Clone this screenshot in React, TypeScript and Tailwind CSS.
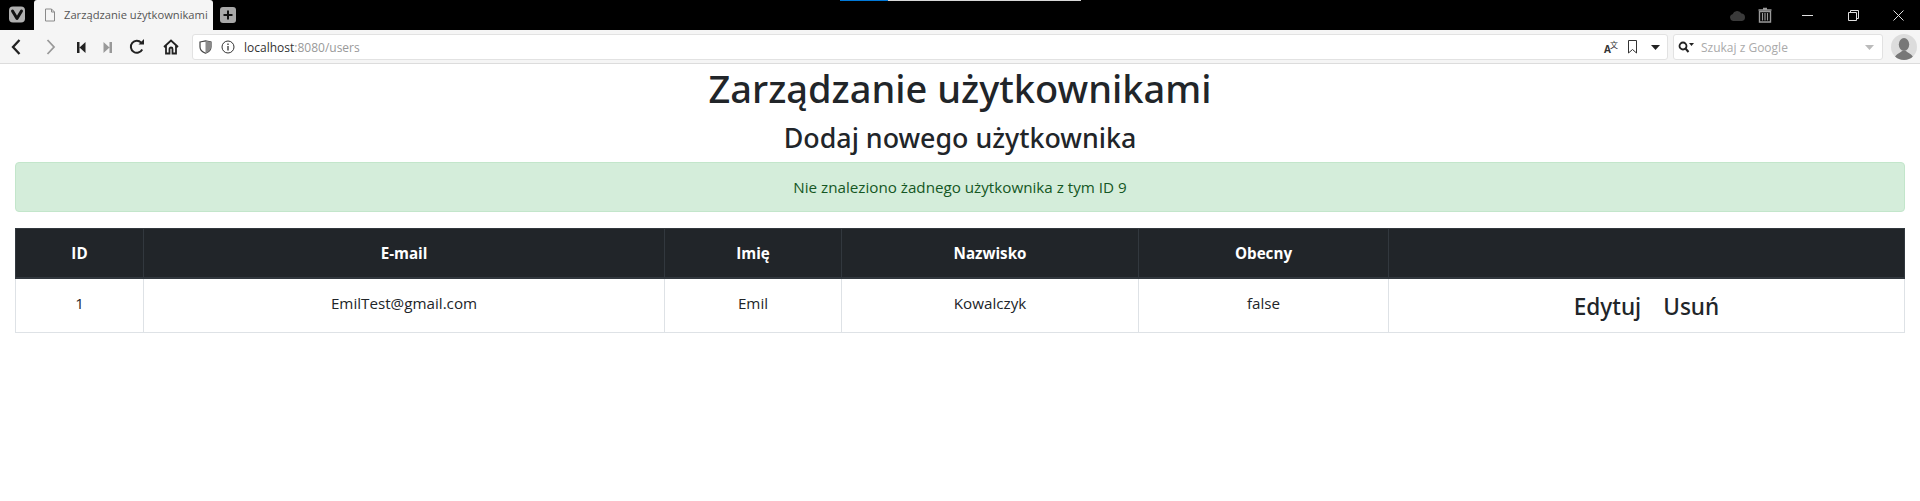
import React from "react";

const font = "font-['Open_Sans','Noto_Sans',sans-serif]";
const headingFont = "font-['Noto_Sans','Open_Sans',sans-serif]";

function TabBar() {
  return (
    <div className="relative flex h-[30px] items-stretch bg-black">
      <div className="absolute left-[840px] top-0 flex h-px">
        <div className="h-px w-[48px] bg-[#0078d7]" />
        <div className="h-px w-[193px] bg-[#d8d8d8]" />
      </div>
      <div className="flex w-[34px] items-center justify-center">
        <svg width="18" height="18" viewBox="0 0 18 18">
          <rect x="1" y="0.5" width="16" height="16" rx="4" fill="#b0b0b0" />
          <path d="M4.5 5 L9 12.5 L13.5 5" fill="none" stroke="#111" strokeWidth="3" strokeLinecap="round" strokeLinejoin="round" />
        </svg>
      </div>
      <div className="flex w-[179px] items-center overflow-hidden rounded-t-[3px] bg-[#f5f5f5] pl-[10px]">
        <svg width="12" height="14" viewBox="0 0 12 14" className="shrink-0">
          <path d="M1.5 1 H7.5 L10.5 4 V13 H1.5 Z M7.5 1 V4 H10.5" fill="none" stroke="#8a8a8a" strokeWidth="1" />
        </svg>
        <span className="ml-[8px] whitespace-nowrap text-[11.2px] text-[#555] font-['Open_Sans',sans-serif]">Zarządzanie użytkownikami</span>
      </div>
      <div className="ml-[7px] flex items-center">
        <svg width="16" height="16" viewBox="0 0 16 16">
          <rect width="16" height="16" rx="3" fill="#a8a8a8" />
          <path d="M8 3.5 V12.5 M3.5 8 H12.5" stroke="#111" strokeWidth="2" />
        </svg>
      </div>
      <div className="ml-auto flex items-center">
        <svg width="17" height="11" viewBox="0 0 17 11" className="mr-[12px]">
          <path d="M4 11 A3.5 3.5 0 0 1 3.5 4.2 A5 5 0 0 1 12.5 3.5 A3.8 3.8 0 0 1 13 11 Z" fill="#3a3a3a" />
        </svg>
        <svg width="14" height="16" viewBox="0 0 14 16" className="mr-[12px]">
          <path d="M5 1.5 H9 M0.5 3 H13.5" stroke="#9a9a9a" strokeWidth="1.6" fill="none" />
          <path d="M1.5 4.5 H12.5 V15 H1.5 Z" fill="none" stroke="#9a9a9a" strokeWidth="1.4" />
          <path d="M4.5 6 V13.5 M7 6 V13.5 M9.5 6 V13.5" stroke="#9a9a9a" strokeWidth="1.2" />
        </svg>
        <div className="flex w-[46px] justify-center">
          <div className="h-px w-[11px] bg-[#e0e0e0]" />
        </div>
        <div className="flex w-[46px] justify-center">
          <svg width="11" height="11" viewBox="0 0 11 11">
            <path d="M0.5 2.5 H8.5 V10.5 H0.5 Z M2.5 2.5 V0.5 H10.5 V8.5 H8.5" fill="none" stroke="#e0e0e0" />
          </svg>
        </div>
        <div className="flex w-[44px] justify-center">
          <svg width="11" height="11" viewBox="0 0 11 11">
            <path d="M0.5 0.5 L10.5 10.5 M10.5 0.5 L0.5 10.5" stroke="#e0e0e0" />
          </svg>
        </div>
      </div>
    </div>
  );
}

function Toolbar() {
  return (
    <div className="flex h-[34px] items-center border-b border-[#dcdcdc] bg-[#f5f5f5] pt-[1px]">
      <div className="flex w-[192px] shrink-0 items-center">
        <svg width="12" height="16" viewBox="0 0 12 16" className="ml-[10px]">
          <path d="M9.5 1 L3 8 L9.5 15" fill="none" stroke="#222" strokeWidth="2.3" />
        </svg>
        <svg width="12" height="16" viewBox="0 0 12 16" className="ml-[23px]">
          <path d="M2.5 1 L9 8 L2.5 15" fill="none" stroke="#999" strokeWidth="1.8" />
        </svg>
        <svg width="9" height="11" viewBox="0 0 9 11" className="ml-[20px]">
          <path d="M0 0 H2.5 V11 H0 Z M8.5 0 V11 L2.5 5.5 Z" fill="#222" />
        </svg>
        <svg width="9" height="11" viewBox="0 0 9 11" className="ml-[17px]">
          <path d="M9 0 H6.5 V11 H9 Z M0.5 0 V11 L6.5 5.5 Z" fill="#999" />
        </svg>
        <svg width="16" height="16" viewBox="0 0 16 16" className="ml-[17px]">
          <path d="M13.2 10.5 A6 6 0 1 1 12.2 3.6" fill="none" stroke="#222" strokeWidth="2" />
          <path d="M9.5 5.5 H15 V0 Z" fill="#222" />
        </svg>
        <svg width="16" height="16" viewBox="0 0 16 16" className="ml-[18px]">
          <path d="M1 8 L8 1.5 L15 8 M3 6.5 V14.5 H6.5 V10 A1.5 1.5 0 0 1 9.5 10 V14.5 H13 V6.5" fill="none" stroke="#222" strokeWidth="1.8" />
        </svg>
      </div>
      <div className="flex h-[26px] flex-1 items-center rounded-[3px] border border-[#e2e2e2] bg-white pl-[6px]">
        <svg width="13" height="14" viewBox="0 0 13 14">
          <path d="M1 2 L6.5 0.8 L12 2 V7 C12 10 9.5 12 6.5 13.2 C3.5 12 1 10 1 7 Z" fill="none" stroke="#444" strokeWidth="1.2" />
          <path d="M6.5 0.8 L12 2 V7 C12 10 9.5 12 6.5 13.2 Z" fill="#8a8a8a" />
        </svg>
        <svg width="14" height="14" viewBox="0 0 14 14" className="ml-[9px]">
          <circle cx="7" cy="7" r="6" fill="none" stroke="#333" />
          <path d="M7 6 V10.5 M7 3.5 V5" stroke="#333" strokeWidth="1.3" />
        </svg>
        <span className="ml-[9px] mt-[2px] text-[12px] text-[#333] font-['Open_Sans',sans-serif]">
          localhost<span className="text-[#999]">:8080/users</span>
        </span>
        <div className="ml-auto flex items-center">
          <span className="relative mr-[10px] block h-[13px] w-[14px] text-[#333] font-['Open_Sans','Noto_Sans_CJK_SC',sans-serif]">
            <span className="absolute bottom-0 left-0 text-[10px] font-bold leading-none">A</span>
            <span className="absolute right-0 top-0 text-[8px] leading-none">文</span>
          </span>
          <svg width="9" height="14" viewBox="0 0 9 14" className="mr-[14px]">
            <path d="M0.5 0.5 H8.5 V13 L4.5 9.5 L0.5 13 Z" fill="none" stroke="#333" />
          </svg>
          <svg width="9" height="5" viewBox="0 0 9 5" className="mr-[7px]">
            <path d="M0 0 H9 L4.5 5 Z" fill="#222" />
          </svg>
        </div>
      </div>
      <div className="ml-[5px] flex h-[26px] w-[210px] items-center rounded-[3px] border border-[#e2e2e2] bg-white pl-[4px]">
        <svg width="16" height="12" viewBox="0 0 16 12">
          <circle cx="5" cy="5" r="3.5" fill="none" stroke="#222" strokeWidth="1.8" />
          <path d="M7.5 7.5 L10.5 11" stroke="#222" strokeWidth="2" />
          <path d="M11 2 H16 L13.5 5 Z" fill="#222" />
        </svg>
        <span className="ml-[7px] mt-[2px] text-[12px] text-[#aaa] font-['Open_Sans',sans-serif]">Szukaj z Google</span>
        <svg width="9" height="5" viewBox="0 0 9 5" className="ml-auto mr-[8px]">
          <path d="M0 0 H9 L4.5 5 Z" fill="#bbb" />
        </svg>
      </div>
      <div className="ml-[8px] mr-[3px] flex h-[26px] w-[26px] items-center justify-center overflow-hidden rounded-full bg-[#dcdcdc]">
        <svg width="26" height="26" viewBox="0 0 26 26">
          <ellipse cx="13" cy="10.5" rx="5.2" ry="6.5" fill="#777" />
          <path d="M3 26 C4 20 9 19 11 17 H15 C17 19 22 20 23 26 Z" fill="#777" />
        </svg>
      </div>
    </div>
  );
}

export default function App() {
  const th = "border border-[#32383e] border-b-2 px-[12px] py-[12px] text-center text-[15.2px] font-bold leading-[24px] align-middle";
  const td = "border border-[#dee2e6] px-[12px] py-[12px] text-center text-[15.2px] align-top leading-[24px]";
  return (
    <div className={`min-h-[501px] bg-white ${font}`}>
      <TabBar />
      <Toolbar />
      <main className="px-[15px] text-[#212529]">
        <h1 className={`mb-[8px] text-center text-[38px] font-medium leading-[48px] ${headingFont}`}>Zarządzanie użytkownikami</h1>
        <h2 className={`mb-[8px] pt-[1px] text-center text-[26.8px] font-medium leading-[33px] ${headingFont}`}>Dodaj nowego użytkownika</h2>
        <div className="mb-[16px] h-[50px] rounded-[4px] border border-[#c3e6cb] bg-[#d4edda] text-center text-[15.2px] leading-[48px] text-[#155724]">
          Nie znaleziono żadnego użytkownika z tym ID 9
        </div>
        <table className="w-full table-fixed border-collapse">
          <colgroup>
            <col className="w-[128px]" />
            <col className="w-[521px]" />
            <col className="w-[177px]" />
            <col className="w-[297px]" />
            <col className="w-[250px]" />
            <col />
          </colgroup>
          <thead>
            <tr className="bg-[#212529] text-white">
              <th className={th}>ID</th>
              <th className={th}>E-mail</th>
              <th className={th}>Imię</th>
              <th className={th}>Nazwisko</th>
              <th className={th}>Obecny</th>
              <th className={th}></th>
            </tr>
          </thead>
          <tbody>
            <tr>
              <td className={td}>1</td>
              <td className={td}>EmilTest@gmail.com</td>
              <td className={td}>Emil</td>
              <td className={td}>Kowalczyk</td>
              <td className={td}>false</td>
              <td className="border border-[#dee2e6] px-[12px] pb-[10px] pt-[13px] text-center">
                <span className={`text-[22.6px] font-medium leading-[30px] ${headingFont}`}>Edytuj</span>
                <span className={`ml-[22px] text-[22.6px] font-medium leading-[30px] ${headingFont}`}>Usuń</span>
              </td>
            </tr>
          </tbody>
        </table>
      </main>
    </div>
  );
}
